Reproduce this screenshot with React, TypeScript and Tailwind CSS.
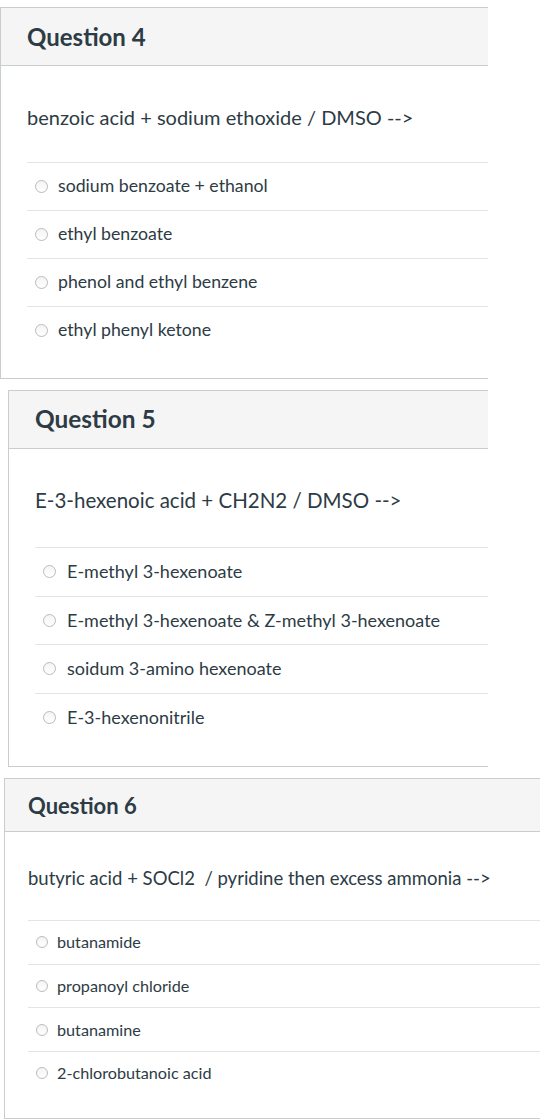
import React from "react";

interface CardStyle {
  box: string;
  header: string;
  title: string;
  question: string;
  list: string;
  row: string;
  radio: string;
  answer: string;
}

interface Question {
  title: string;
  text: string;
  answers: string[];
  style: CardStyle;
}

const questions: Question[] = [
  {
    title: "Question 4",
    text: "benzoic acid + sodium ethoxide / DMSO -->",
    answers: [
      "sodium benzoate + ethanol",
      "ethyl benzoate",
      "phenol and ethyl benzene",
      "ethyl phenyl ketone",
    ],
    style: {
      box: "mt-[7px] ml-0 w-[488px] pb-[24px]",
      header: "h-[58px] pl-[26px]",
      title: "text-[24px]",
      question: "pt-[38px] pb-[32px] pl-[26px] text-[20px] leading-[26px]",
      list: "ml-[26px]",
      row: "h-[48px] pl-[8px] gap-[10px]",
      radio: "w-[13px] h-[13px]",
      answer: "text-[17.7px]",
    },
  },
  {
    title: "Question 5",
    text: "E-3-hexenoic acid + CH2N2 / DMSO -->",
    answers: [
      "E-methyl 3-hexenoate",
      "E-methyl 3-hexenoate & Z-methyl 3-hexenoate",
      "soidum 3-amino hexenoate",
      "E-3-hexenonitrile",
    ],
    style: {
      box: "mt-[11px] ml-[8px] w-[480px] pb-[25px]",
      header: "h-[58px] pl-[26px]",
      title: "text-[24.4px]",
      question: "pt-[38px] pb-[33px] pl-[26px] text-[20.5px] leading-[27px]",
      list: "ml-[26px]",
      row: "h-[48.5px] pl-[8px] gap-[11px]",
      radio: "w-[13px] h-[13px]",
      answer: "text-[18px]",
    },
  },
  {
    title: "Question 6",
    text: "butyric acid + SOCl2\u00a0 / pyridine then excess ammonia -->",
    answers: [
      "butanamide",
      "propanoyl chloride",
      "butanamine",
      "2-chlorobutanoic acid",
    ],
    style: {
      box: "mt-[11px] ml-[4px] w-[536px] pb-[23px]",
      header: "h-[53px] pl-[23px]",
      title: "text-[22px]",
      question: "pt-[34px] pb-[30px] pl-[23px] text-[18.5px] leading-[24px]",
      list: "ml-[23px]",
      row: "h-[43.7px] pl-[8px] gap-[9px]",
      radio: "w-[12px] h-[12px]",
      answer: "text-[16.2px]",
    },
  },
];

function QuestionCard({ q }: { q: Question }) {
  const s = q.style;
  return (
    <div
      className={`${s.box} border-l border-t border-b border-[#c7cdd1] bg-white`}
    >
      <div
        className={`${s.header} flex items-center bg-[#f5f5f5] border-b border-[#c7cdd1]`}
      >
        <h2 className={`${s.title} font-bold text-[#2d3b45]`}>{q.title}</h2>
      </div>
      <p className={`${s.question} text-[#2d3b45]`}>{q.text}</p>
      <div className={s.list}>
        {q.answers.map((a) => (
          <div
            key={a}
            className={`${s.row} flex items-center border-t border-[#e2e5e7]`}
          >
            <span
              className={`${s.radio} shrink-0 rounded-full border border-[#b8bcbf] bg-gradient-to-b from-[#f4f4f4] to-white`}
            />
            <span className={`${s.answer} text-[#2d3b45]`}>{a}</span>
          </div>
        ))}
      </div>
    </div>
  );
}

export default function App() {
  return (
    <div
      className="w-[554px] h-[1120px] overflow-hidden bg-white"
      style={{ fontFamily: "Lato, 'Open Sans', sans-serif" }}
    >
      {questions.map((q) => (
        <QuestionCard key={q.title} q={q} />
      ))}
    </div>
  );
}
